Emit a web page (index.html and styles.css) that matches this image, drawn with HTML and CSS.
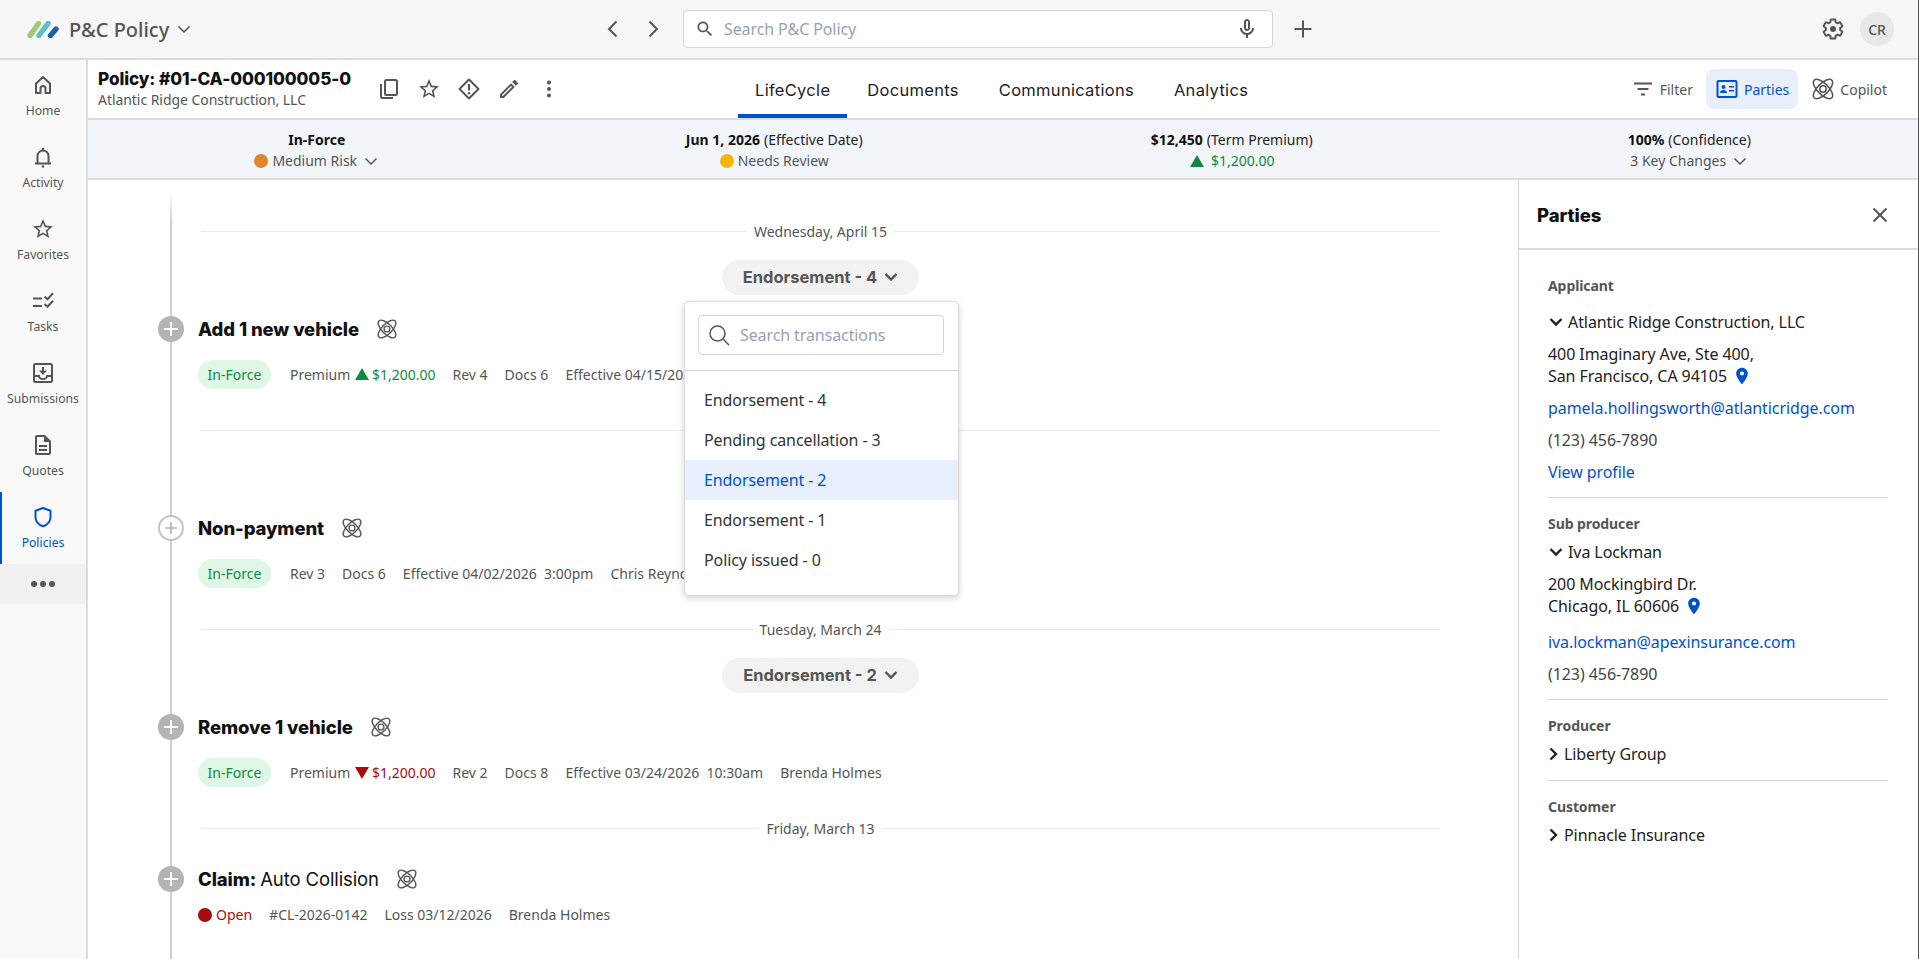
FILE: index.html
```html
<!DOCTYPE html>
<html lang="en">
<head>
  <meta charset="UTF-8">
  <meta name="viewport" content="width=device-width, initial-scale=1.0">
  <title>P&amp;C Policy</title>
  <link rel="stylesheet" href="styles.css">
</head>

<body>
  <!-- shared icons -->
  <svg class="sprite">
    <symbol id="i-atom" viewBox="0 0 24 24">
      <g fill="none" stroke="currentColor" stroke-width="1.5">
        <ellipse cx="12" cy="12" rx="12.500" ry="5.500" transform="rotate(45 12 12)"/>
        <ellipse cx="12" cy="12" rx="12.500" ry="5.500" transform="rotate(-45 12 12)"/>
        <circle cx="12" cy="12" r="3.200"/>
      </g>
    </symbol>
    <symbol id="i-star" viewBox="0 0 24 24">
      <path fill="currentColor" d="M22 9.24l-7.19-.62L12 2 9.19 8.63 2 9.24l5.46 4.73L5.82 21 12 17.27 18.18 21l-1.63-7.03L22 9.24zM12 15.4l-3.76 2.27 1-4.28-3.32-2.88 4.38-.38L12 6.1l1.71 4.04 4.38.38-3.32 2.88 1 4.28L12 15.4z"/>
    </symbol>
    <symbol id="i-chev" viewBox="0 0 16 16">
      <path fill="none" stroke="currentColor" stroke-width="1.5" d="M2.500 5.500L8 11l5.500-5.500"/>
    </symbol>
    <symbol id="i-chev-bold" viewBox="0 0 16 16">
      <path fill="none" stroke="currentColor" stroke-width="2.400" d="M2.500 5L8 10.500 13.500 5"/>
    </symbol>
    <symbol id="i-chev-right" viewBox="0 0 16 16">
      <path fill="none" stroke="currentColor" stroke-width="2.400" d="M5.500 2.500L11 8l-5.500 5.500"/>
    </symbol>
    <symbol id="i-pin" viewBox="0 0 24 24">
      <path fill="currentColor" d="M12 2C8.13 2 5 5.13 5 9c0 5.25 7 13 7 13s7-7.75 7-13c0-3.87-3.13-7-7-7zm0 9.500a2.500 2.500 0 0 1 0-5 2.500 2.500 0 0 1 0 5z"/>
    </symbol>
    <symbol id="i-plus" viewBox="0 0 26 26">
      <path fill="none" stroke="currentColor" stroke-width="2" d="M13 6v14M6 13h14"/>
    </symbol>
  </svg>

  <header class="topbar">
    <div class="brand">
      <svg class="logo" viewBox="0 0 32 17">
        <path d="M3 14.500L11.500 2.500" stroke="#9ccb7c" stroke-width="5.400" stroke-linecap="round"/>
        <path d="M12 14.500L21 2.500" stroke="#5cc1c4" stroke-width="5.400" stroke-linecap="round"/>
        <path d="M23.500 14.500L29 8" stroke="#1f5f9e" stroke-width="5.400" stroke-linecap="round"/>
      </svg>
      <span class="brand-name">P&amp;C Policy</span>
      <svg class="chev-16"><use href="#i-chev"/></svg>
    </div>
    <div class="top-center">
      <svg class="nav-arrow" viewBox="0 0 24 24"><path d="M15.500 4.500L8 12l7.500 7.500"/></svg>
      <svg class="nav-arrow" viewBox="0 0 24 24"><path d="M8.500 4.500L16 12l-7.500 7.500"/></svg>
      <div class="search">
        <svg class="icon-20" viewBox="0 0 24 24"><path fill="currentColor" d="M15.500 14h-.79l-.28-.27C15.410 12.590 16 11.110 16 9.500 16 5.910 13.090 3 9.500 3S3 5.910 3 9.500 5.910 16 9.500 16c1.610 0 3.090-.59 4.230-1.570l.27.28v.79l5 4.990L20.490 19l-4.990-5zm-6 0C7.010 14 5 11.990 5 9.500S7.010 5 9.500 5 14 7.010 14 9.500 11.990 14 9.500 14z"/></svg>
        <span class="search-text">Search P&amp;C Policy</span>
        <svg class="icon-24" viewBox="0 0 24 24"><path fill="currentColor" d="M12 14c1.660 0 3-1.340 3-3V5c0-1.660-1.340-3-3-3S9 3.340 9 5v6c0 1.660 1.340 3 3 3zm-1-9c0-.55.45-1 1-1s1 .45 1 1v6c0 .55-.45 1-1 1s-1-.45-1-1V5zm6 6c0 2.760-2.240 5-5 5s-5-2.240-5-5H5c0 3.530 2.610 6.430 6 6.920V21h2v-3.080c3.390-.49 6-3.390 6-6.920h-2z"/></svg>
      </div>
      <svg class="top-plus" viewBox="0 0 24 24"><path d="M12 3.500v17M3.500 12h17"/></svg>
    </div>
    <div class="top-right">
      <svg class="icon-24" viewBox="0 0 24 24">
        <path fill="none" stroke="currentColor" stroke-width="2" d="M19.140 12.940c.04-.3.06-.61.06-.94 0-.32-.02-.64-.07-.94l2.030-1.580c.18-.14.23-.41.12-.61l-1.920-3.320c-.12-.22-.37-.29-.59-.22l-2.390.96c-.5-.38-1.030-.7-1.620-.94l-.36-2.540c-.04-.24-.24-.41-.48-.41h-3.840c-.24 0-.43.17-.47.41l-.36 2.540c-.59.24-1.130.57-1.620.94l-2.390-.96c-.22-.08-.47 0-.59.22L2.740 8.870c-.12.21-.08.47.12.61l2.030 1.580c-.05.3-.09.63-.09.94s.02.64.07.94l-2.030 1.580c-.18.14-.23.41-.12.61l1.920 3.320c.12.22.37.29.59.22l2.390-.96c.5.38 1.030.7 1.620.94l.36 2.540c.05.24.24.41.48.41h3.840c.24 0 .44-.17.47-.41l.36-2.540c.59-.24 1.130-.56 1.620-.94l2.390.96c.22.08.47 0 .59-.22l1.920-3.320c.12-.22.07-.47-.12-.61l-2.010-1.580z"/>
        <circle cx="12" cy="12" r="3" fill="currentColor"/>
      </svg>
      <div class="avatar">CR</div>
    </div>
  </header>

  <div class="shell">
    <nav class="sidebar">
      <a class="side-item">
        <svg class="icon-24" viewBox="0 0 24 24"><path fill="none" stroke="currentColor" stroke-width="2" stroke-linejoin="round" d="M5 10.500L12 4l7 6.500V20h-4.500v-4.500a2.500 2.500 0 0 0-5 0V20H5z"/></svg>
        Home
      </a>
      <a class="side-item">
        <svg class="icon-24" viewBox="0 0 24 24"><path fill="none" stroke="currentColor" stroke-width="2" d="M6.500 18v-7a5.500 5.500 0 0 1 11 0v7M4 18.500h16"/><circle cx="12" cy="4" r="1.300" fill="currentColor"/><circle cx="12" cy="21.500" r="1.300" fill="currentColor"/></svg>
        Activity
      </a>
      <a class="side-item">
        <svg class="icon-24"><use href="#i-star"/></svg>
        Favorites
      </a>
      <a class="side-item">
        <svg class="icon-24" viewBox="0 0 24 24"><path fill="none" stroke="currentColor" stroke-width="2" d="M2 9.500h9M2 17h9M13.500 7.500l3 2.800 5.500-6M13.500 15l3 2.800 5.500-6"/></svg>
        Tasks
      </a>
      <a class="side-item">
        <svg class="icon-24" viewBox="0 0 24 24"><path fill="none" stroke="currentColor" stroke-width="2" d="M4.500 3h15A1.500 1.500 0 0 1 21 4.500v15a1.500 1.500 0 0 1-1.500 1.500h-15A1.500 1.500 0 0 1 3 19.500v-15A1.500 1.500 0 0 1 4.500 3zM3 15h5a4 3 0 0 0 8 0h5M12 6v6"/><path fill="currentColor" d="M8 9.500h8L12 14z"/></svg>
        Submissions
      </a>
      <a class="side-item">
        <svg class="icon-24" viewBox="0 0 24 24"><path fill="currentColor" d="M8 16h8v2H8zm0-4h8v2H8zm6-10H6c-1.100 0-2 .9-2 2v16c0 1.100.89 2 1.990 2H18c1.100 0 2-.9 2-2V8l-6-6zm4 18H6V4h7v5h5v11z"/></svg>
        Quotes
      </a>
      <a class="side-item active">
        <svg class="icon-24" viewBox="0 0 24 24"><path fill="none" stroke="currentColor" stroke-width="2" stroke-linejoin="round" d="M12 3l7.500 2.700V12c0 4.600-3.200 7.800-7.500 9.200C7.700 19.800 4.500 16.600 4.500 12V5.700z"/></svg>
        Policies
      </a>
      <a class="side-more"><i></i><i></i><i></i></a>
    </nav>

    <div class="content">
      <section class="policy-head">
        <div class="policy-left">
          <div class="policy-id">
            <div class="policy-title">Policy: #01-CA-000100005-0</div>
            <div class="policy-sub">Atlantic Ridge Construction, LLC</div>
          </div>
          <div class="policy-actions">
            <svg class="icon-24" viewBox="0 0 24 24"><path fill="none" stroke="currentColor" stroke-width="2" d="M9.500 3h9A1.500 1.500 0 0 1 20 4.500v12a1.500 1.500 0 0 1-1.500 1.500h-9A1.500 1.500 0 0 1 8 16.500v-12A1.500 1.500 0 0 1 9.500 3zM4 7v12.500A1.500 1.500 0 0 0 5.500 21H16"/></svg>
            <svg class="icon-24"><use href="#i-star"/></svg>
            <svg class="icon-24" viewBox="0 0 24 24"><path fill="none" stroke="currentColor" stroke-width="2" stroke-linejoin="round" d="M12 2.500L21.500 12 12 21.500 2.500 12z"/><path stroke="currentColor" stroke-width="2" d="M12 7v6.500"/><circle cx="12" cy="16.300" r="1.200" fill="currentColor"/></svg>
            <svg class="icon-24" viewBox="0 0 24 24"><path fill="currentColor" d="M3 17.250V21h3.750L17.810 9.940l-3.750-3.750L3 17.250zM5.920 19H5v-.92l9.060-9.060.92.92L5.920 19zM20.710 7.040c.39-.39.39-1.020 0-1.410l-2.340-2.340c-.2-.2-.45-.29-.71-.29s-.51.1-.7.29l-1.830 1.830 3.750 3.750 1.830-1.830z"/></svg>
            <svg class="icon-24" viewBox="0 0 24 24"><circle cx="12" cy="5.500" r="2" fill="currentColor"/><circle cx="12" cy="12" r="2" fill="currentColor"/><circle cx="12" cy="18.500" r="2" fill="currentColor"/></svg>
          </div>
        </div>
        <div class="tabs">
          <a class="tab active">LifeCycle</a>
          <a class="tab">Documents</a>
          <a class="tab">Communications</a>
          <a class="tab">Analytics</a>
        </div>
        <div class="head-tools">
          <a class="tool">
            <svg class="icon-24" viewBox="0 0 24 24"><path fill="none" stroke="currentColor" stroke-width="2" d="M3 6.500h18M6.500 12h11M10 17.500h4"/></svg>
            Filter
          </a>
          <a class="tool on">
            <svg class="icon-24" viewBox="0 0 24 24"><rect x="2.500" y="4" width="19" height="16" rx="1" fill="none" stroke="currentColor" stroke-width="2"/><circle cx="8.500" cy="10" r="2" fill="currentColor"/><path fill="currentColor" d="M5 16c0-2 1.600-3 3.500-3s3.500 1 3.500 3zM14 9h5v1.600h-5zM14 13h5v1.600h-5z"/></svg>
            Parties
          </a>
          <a class="tool">
            <svg class="icon-24"><use href="#i-atom"/></svg>
            Copilot
          </a>
        </div>
      </section>

      <section class="summary">
        <div class="sum-col">
          <div class="sum-top"><b>In-Force</b></div>
          <div class="sum-bot"><span class="dot orange"></span>Medium Risk<svg class="chev-16"><use href="#i-chev"/></svg></div>
        </div>
        <div class="sum-col">
          <div class="sum-top"><b>Jun 1, 2026</b> (Effective Date)</div>
          <div class="sum-bot"><span class="dot yellow"></span>Needs Review</div>
        </div>
        <div class="sum-col">
          <div class="sum-top"><b>$12,450</b> (Term Premium)</div>
          <div class="sum-bot green"><span class="tri-up"></span>$1,200.00</div>
        </div>
        <div class="sum-col">
          <div class="sum-top"><b>100%</b> (Confidence)</div>
          <div class="sum-bot">3 Key Changes<svg class="chev-16"><use href="#i-chev"/></svg></div>
        </div>
      </section>

      <div class="body-row">
        <main class="timeline">
          <div class="date-row first"><span>Wednesday, April 15</span></div>
          <div class="pill-row"><span class="tx-pill">Endorsement - 4<svg class="chev-16"><use href="#i-chev-bold"/></svg></span></div>

          <div class="event">
            <span class="node"><svg><use href="#i-plus"/></svg></span>
            <h3>Add 1 new vehicle</h3>
            <svg class="icon-22"><use href="#i-atom"/></svg>
          </div>
          <div class="meta">
            <span class="status">In-Force</span>
            <span>Premium <span class="tri-up"></span><span class="green">$1,200.00</span></span>
            <span>Rev 4</span><span>Docs 6</span>
            <span>Effective 04/15/2026</span>
          </div>

          <!-- date and pill of this group sit behind the open dropdown -->
          <div class="date-row"></div>
          <div class="pill-row"></div>

          <div class="event">
            <span class="node hollow"><svg><use href="#i-plus"/></svg></span>
            <h3>Non-payment</h3>
            <svg class="icon-22"><use href="#i-atom"/></svg>
          </div>
          <div class="meta">
            <span class="status">In-Force</span>
            <span>Rev 3</span><span>Docs 6</span>
            <span>Effective 04/02/2026&nbsp; 3:00pm</span><span>Chris Reynolds</span>
          </div>

          <div class="date-row"><span>Tuesday, March 24</span></div>
          <div class="pill-row"><span class="tx-pill">Endorsement - 2<svg class="chev-16"><use href="#i-chev-bold"/></svg></span></div>

          <div class="event">
            <span class="node"><svg><use href="#i-plus"/></svg></span>
            <h3>Remove 1 vehicle</h3>
            <svg class="icon-22"><use href="#i-atom"/></svg>
          </div>
          <div class="meta">
            <span class="status">In-Force</span>
            <span>Premium <span class="tri-down"></span><span class="red">$1,200.00</span></span>
            <span>Rev 2</span><span>Docs 8</span>
            <span>Effective 03/24/2026&nbsp; 10:30am</span><span>Brenda Holmes</span>
          </div>

          <div class="date-row"><span>Friday, March 13</span></div>

          <div class="event claim">
            <span class="node"><svg><use href="#i-plus"/></svg></span>
            <h3>Claim: <span>Auto Collision</span></h3>
            <svg class="icon-22"><use href="#i-atom"/></svg>
          </div>
          <div class="meta claim-meta">
            <span class="red"><span class="dot dark-red"></span>Open</span>
            <span>#CL-2026-0142</span><span>Loss 03/12/2026</span><span>Brenda Holmes</span>
          </div>

          <div class="tx-menu">
            <div class="tx-search-wrap">
              <div class="tx-search">
                <svg class="icon-24" viewBox="0 0 24 24"><circle cx="10.500" cy="10.500" r="7.500" fill="none" stroke="currentColor" stroke-width="1.500"/><path stroke="currentColor" stroke-width="1.500" d="M16 16l6 6"/></svg>
                <span>Search transactions</span>
              </div>
            </div>
            <ul class="tx-list">
              <li>Endorsement - 4</li>
              <li>Pending cancellation - 3</li>
              <li class="selected">Endorsement - 2</li>
              <li>Endorsement - 1</li>
              <li>Policy issued - 0</li>
            </ul>
          </div>
        </main>

        <aside class="parties">
          <div class="parties-head">
            <h2>Parties</h2>
            <svg class="icon-24" viewBox="0 0 24 24"><path fill="none" stroke="currentColor" stroke-width="2" d="M5.500 5.500l13 13M18.500 5.500l-13 13"/></svg>
          </div>
          <div class="party">
            <div class="party-label">Applicant</div>
            <div class="party-name"><svg class="chev-16"><use href="#i-chev-bold"/></svg>Atlantic Ridge Construction, LLC</div>
            <div class="party-addr">400 Imaginary Ave, Ste 400,<br>San Francisco, CA 94105<svg class="pin"><use href="#i-pin"/></svg></div>
            <a class="party-link">pamela.hollingsworth@atlanticridge.com</a>
            <div class="party-phone">(123) 456-7890</div>
            <a class="party-link">View profile</a>
          </div>
          <div class="party">
            <div class="party-label">Sub producer</div>
            <div class="party-name"><svg class="chev-16"><use href="#i-chev-bold"/></svg>Iva Lockman</div>
            <div class="party-addr">200 Mockingbird Dr.<br>Chicago, IL 60606<svg class="pin"><use href="#i-pin"/></svg></div>
            <a class="party-link">iva.lockman@apexinsurance.com</a>
            <div class="party-phone">(123) 456-7890</div>
          </div>
          <div class="party">
            <div class="party-label">Producer</div>
            <div class="party-name closed"><svg class="chev-16"><use href="#i-chev-right"/></svg>Liberty Group</div>
          </div>
          <div class="party">
            <div class="party-label">Customer</div>
            <div class="party-name closed"><svg class="chev-16"><use href="#i-chev-right"/></svg>Pinnacle Insurance</div>
          </div>
        </aside>
      </div>
    </div>
  </div>
</body>
</html>
```

FILE: styles.css
```css
* {
  margin: 0;
  padding: 0;
  box-sizing: border-box;
}

body {
  font-family: 'Noto Sans', sans-serif;
  font-size: 14px;
  color: #555;
  background: #fff;
  height: 100vh;
  overflow: hidden;
  border-right: 1px solid #555;
}

.sprite {
  width: 0;
  height: 0;
  position: absolute;
}

svg {
  display: block;
  flex-shrink: 0;
}

.icon-20 { width: 20px; height: 20px; }
.icon-22 { width: 22px; height: 22px; color: #555; overflow: visible; }
.icon-24 { width: 24px; height: 24px; color: #555; overflow: visible; }
.chev-16 { width: 16px; height: 16px; }

/* top bar */
.topbar {
  height: 60px;
  display: flex;
  align-items: center;
  background: #f7f7f7;
  border-bottom: 2px solid #dcdcdc;
  padding: 0 24px 0 27px;
}

.brand {
  width: 574px;
  display: flex;
  align-items: center;
  color: #555;
}

.logo {
  width: 32px;
  height: 17px;
  margin-right: 10px;
  overflow: visible;
}

.brand-name {
  font-size: 20px;
  font-weight: 500;
  margin-right: 7px;
}

.top-center {
  flex: 1;
  display: flex;
  align-items: center;
}

.nav-arrow {
  width: 24px;
  height: 24px;
  margin-right: 16px;
  fill: none;
  stroke: #555;
  stroke-width: 2;
}

.search {
  width: 590px;
  height: 38px;
  margin-left: 2px;
  display: flex;
  align-items: center;
  padding: 0 13px 0 11px;
  background: #fff;
  border: 1px solid #d5d5d5;
  border-radius: 4px;
  color: #555;
}

.search-text {
  flex: 1;
  margin-left: 9px;
  font-size: 16px;
  letter-spacing: -0.1px;
  color: #98a2b3;
}

.top-plus {
  width: 24px;
  height: 24px;
  margin-left: 18px;
  fill: none;
  stroke: #555;
  stroke-width: 2;
}

.top-right {
  display: flex;
  align-items: center;
  gap: 15px;
}

.avatar {
  width: 34px;
  height: 34px;
  border-radius: 50%;
  background: #e8e8e8;
  color: #555;
  font-size: 14px;
  font-weight: 500;
  display: flex;
  align-items: center;
  justify-content: center;
}

.shell {
  display: flex;
  height: 899px;
}

/* side nav */
.sidebar {
  width: 88px;
  flex-shrink: 0;
  background: #f9f9f9;
  border-right: 2px solid #dcdcdc;
}

.side-item {
  height: 72px;
  padding-top: 13px;
  display: flex;
  flex-direction: column;
  align-items: center;
  gap: 5px;
  font-size: 12.200px;
  line-height: 18px;
  color: #555;
}

.side-item.active {
  color: #0052cc;
  border-left: 2px solid #0052cc;
  padding-right: 2px;
}

.side-item.active .icon-24 {
  color: #0052cc;
}

.side-more {
  height: 40px;
  background: #f1f1f1;
  display: flex;
  align-items: center;
  justify-content: center;
  gap: 3px;
}

.side-more i {
  width: 6px;
  height: 6px;
  border-radius: 50%;
  background: #555;
}

.content {
  flex: 1;
  min-width: 0;
  display: flex;
  flex-direction: column;
}

/* policy header */
.policy-head {
  height: 60px;
  display: flex;
  align-items: center;
  justify-content: space-between;
  padding: 0 22px 0 10px;
  border-bottom: 2px solid #dcdcdc;
}

.policy-left {
  width: 640px;
  display: flex;
  align-items: center;
}

.policy-id {
  width: 279px;
}

.policy-title {
  font-family: Inter, sans-serif;
  font-size: 17.200px;
  font-weight: 800;
  line-height: 22px;
  letter-spacing: -0.1px;
  color: #111;
}

.policy-sub {
  font-size: 14px;
  line-height: 20px;
  letter-spacing: -0.05px;
  color: #555;
}

.policy-actions {
  display: flex;
  gap: 16px;
}

.tabs {
  display: flex;
  height: 58px;
  align-items: stretch;
  margin-right: auto;
}

.tab {
  padding: 5px 20px 0;
  font-family: Inter, sans-serif;
  font-size: 16.500px;
  letter-spacing: 0.3px;
  color: #222;
  display: flex;
  align-items: center;
  border-bottom: 4px solid transparent;
}

.tab.active {
  padding: 5px 17px 0;
  border-bottom-color: #0052cc;
}

.head-tools {
  display: flex;
  align-items: center;
  gap: 4px;
}

.tool {
  display: flex;
  align-items: center;
  gap: 5px;
  height: 40px;
  padding: 0 9px;
  border-radius: 8px;
  font-size: 14px;
  color: #555;
}

.tool.on {
  background: #e6effb;
  color: #0052cc;
}

.tool.on .icon-24 {
  color: #0052cc;
}

/* summary band */
.summary {
  height: 60px;
  display: grid;
  grid-template-columns: repeat(4, 1fr);
  background: #f2f6fb;
  border-bottom: 2px solid #dcdcdc;
  padding-top: 9px;
}

.sum-col {
  text-align: center;
}

.sum-top,
.sum-bot {
  display: flex;
  justify-content: center;
  align-items: center;
  gap: 4px;
  height: 21px;
  font-size: 14px;
}

.sum-top {
  color: #222;
}

.sum-top b {
  color: #111;
}

.sum-bot .chev-16 {
  margin-left: 2px;
}

.dot {
  display: inline-block;
  width: 14px;
  height: 14px;
  border-radius: 50%;
}

.orange { background: #e0852c; }
.yellow { background: #f7b500; }
.dark-red { background: #a30d0d; margin-right: 4px; vertical-align: -2px; }

.green { color: #12893f; }
.red { color: #a30d0d; }

.tri-up,
.tri-down {
  display: inline-block;
  width: 0;
  height: 0;
  margin: 0 3px 0 1px;
  border-left: 7px solid transparent;
  border-right: 7px solid transparent;
}

.tri-up { border-bottom: 12px solid #12893f; }
.tri-down { border-top: 12px solid #a30d0d; vertical-align: -1px; }

/* main area */
.body-row {
  flex: 1;
  min-height: 0;
  display: flex;
}

.timeline {
  flex: 1;
  min-width: 0;
  position: relative;
  overflow: hidden;
  padding: 41px 78px 0 110px;
}

.timeline::before {
  content: "";
  position: absolute;
  left: 82px;
  top: 12px;
  bottom: 0;
  width: 2px;
  background: linear-gradient(#fff, #d0d0d0 30px);
}

.date-row {
  display: flex;
  align-items: center;
  height: 20px;
  margin-top: 31px;
  margin-left: 3px;
  color: #555;
  font-size: 14px;
}

.date-row.first {
  margin-top: 0;
}

.date-row::before,
.date-row::after {
  content: "";
  flex: 1;
  height: 1px;
  background: #e4ecf5;
}

.date-row span {
  padding: 0 7px;
}

.pill-row {
  height: 35px;
  margin-top: 19px;
  display: flex;
  justify-content: center;
  margin-left: 3px;
}

.tx-pill {
  height: 35px;
  padding: 0 20px 2px 21px;
  display: flex;
  align-items: center;
  gap: 6px;
  background: #f2f2f2;
  border-radius: 18px;
  font-family: Inter, sans-serif;
  font-size: 16.500px;
  font-weight: 700;
  color: #555;
}

.event {
  position: relative;
  height: 26px;
  margin-top: 21px;
  display: flex;
  align-items: center;
  gap: 17px;
}

.event h3 {
  font-family: Inter, sans-serif;
  font-size: 18.500px;
  font-weight: 800;
  letter-spacing: -0.1px;
  color: #111;
}

.event h3 span {
  font-weight: 400;
}

.event.claim {
  margin-top: 28px;
}

.node {
  position: absolute;
  left: -40px;
  top: 0;
  width: 26px;
  height: 26px;
  border-radius: 50%;
  background: #b4b4b4;
  color: #fff;
  display: flex;
  align-items: center;
  justify-content: center;
}

.node svg {
  width: 26px;
  height: 26px;
}

.node.hollow {
  background: #fff;
  border: 2px solid #c4c4c4;
  color: #b4b4b4;
}

.node.hollow svg {
  width: 22px;
  height: 22px;
}

.meta {
  margin-top: 18px;
  height: 29px;
  display: flex;
  align-items: center;
  gap: 17px;
  font-size: 14px;
  color: #555;
  white-space: nowrap;
}

.claim-meta {
  margin-top: 10px;
  height: 24px;
}

.status {
  height: 29px;
  width: 73px;
  display: flex;
  align-items: center;
  justify-content: center;
  background: #def7e6;
  border-radius: 15px;
  color: #12893f;
  margin-right: 2px;
}

/* transactions dropdown, hangs over the timeline */
.tx-menu {
  position: absolute;
  left: 596px;
  top: 121px;
  width: 275px;
  height: 295px;
  background: #fff;
  border: 1px solid #dcdcdc;
  border-radius: 5px;
  box-shadow: 0 2px 6px rgba(0, 0, 0, 0.18);
}

.tx-search-wrap {
  height: 69px;
  padding: 13px 14px 0 13px;
  border-bottom: 1px solid #d5d5d5;
}

.tx-search {
  height: 40px;
  display: flex;
  align-items: center;
  gap: 9px;
  padding-left: 8px;
  border: 1px solid #d5d5d5;
  border-radius: 4px;
  font-size: 16px;
  letter-spacing: -0.1px;
  color: #98a2b3;
}

.tx-search .icon-24 {
  color: #555;
}

.tx-list {
  list-style: none;
  padding-top: 9px;
}

.tx-list li {
  height: 40px;
  padding-left: 19px;
  display: flex;
  align-items: center;
  font-size: 16px;
  letter-spacing: -0.1px;
  color: #333;
}

.tx-list li.selected {
  background: #e6effb;
  color: #0052cc;
}

/* parties panel */
.parties {
  width: 400px;
  flex-shrink: 0;
  border-left: 1px solid #d5d5d5;
  color: #222;
  letter-spacing: -0.08px;
}

.parties-head {
  height: 70px;
  display: flex;
  align-items: center;
  justify-content: space-between;
  padding: 2px 26px 0 18px;
  border-bottom: 2px solid #dcdcdc;
}

.parties-head h2 {
  font-family: Inter, sans-serif;
  font-size: 18.500px;
  font-weight: 800;
  color: #111;
}

.party {
  margin: 0 30px 0 29px;
  padding: 26px 0 14px;
  border-bottom: 1px solid #d5d5d5;
}

.party:first-of-type {
  padding-bottom: 15px;
}

.party:last-child {
  border-bottom: 0;
}

.party + .party {
  padding-top: 16px;
}

.party-label {
  font-size: 14px;
  font-weight: 700;
  line-height: 20px;
  color: #555;
}

.party-name {
  display: flex;
  align-items: center;
  gap: 4px;
  font-size: 16px;
  line-height: 24px;
  color: #222;
}

.party-label + .party-name {
  margin-top: 14px;
}

.party + .party .party-name {
  margin-top: 6px;
}

.party-name.closed svg {
  margin-left: -3px;
  margin-right: -1px;
}

.party-addr {
  margin-top: 9px;
  font-size: 16px;
  line-height: 22px;
  color: #222;
}

.pin {
  display: inline-block;
  width: 20px;
  height: 20px;
  margin-left: 5px;
  vertical-align: -4px;
  color: #0052cc;
}

.party-link {
  display: block;
  margin-top: 10px;
  font-size: 16px;
  line-height: 22px;
  color: #0052cc;
}

.party + .party .party-addr + .party-link {
  margin-top: 14px;
}

.party-phone {
  margin-top: 10px;
  font-size: 16px;
  line-height: 22px;
  color: #444;
}
```
